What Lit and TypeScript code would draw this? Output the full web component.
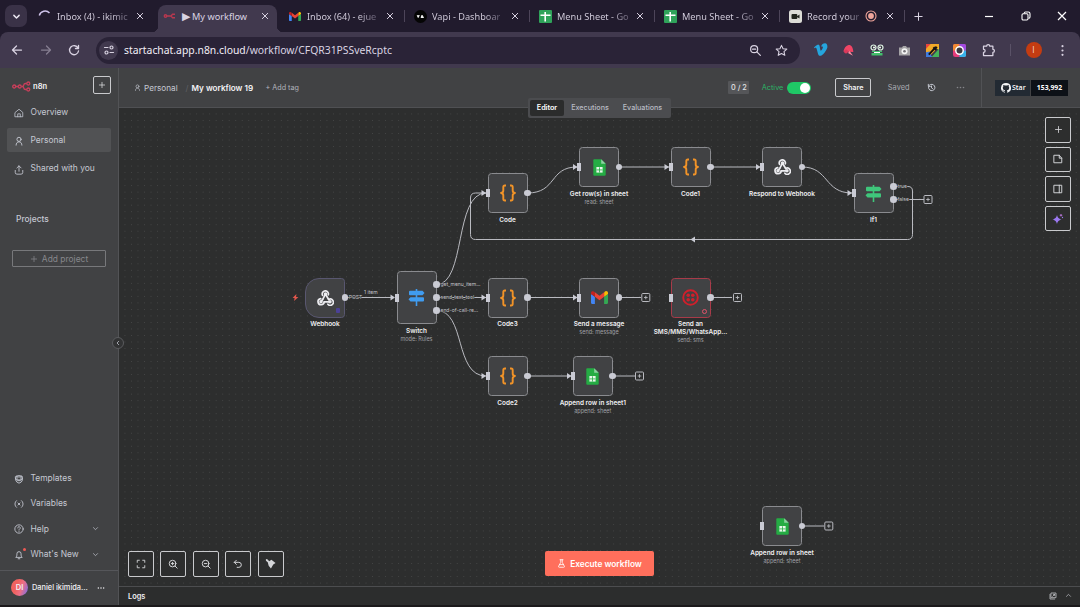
import { LitElement, html, svg, css, nothing } from "lit";
import { customElement, property } from "lit/decorators.js";
import { styleMap } from "lit/directives/style-map.js";
import { classMap } from "lit/directives/class-map.js";

/* ---------- icons ---------- */
const stroke = (size: number, body: unknown, w = 2) => html`<svg
  width=${size} height=${size} viewBox="0 0 24 24" fill="none" stroke="currentColor"
  stroke-width=${w} stroke-linecap="round" stroke-linejoin="round">${body}</svg>`;

const I: Record<string, (s?: number) => unknown> = {
  close: (s = 9) => stroke(s, svg`<path d="M4 4 20 20M20 4 4 20"/>`, 3),
  chevron: (s = 8) => stroke(s, svg`<path d="m5 9 7 7 7-7"/>`, 2.4),
  chevronBold: (s = 9) => stroke(s, svg`<path d="m5 9 7 7 7-7"/>`, 3.8),
  chevronUp: (s = 8) => stroke(s, svg`<path d="m5 15 7-7 7 7"/>`, 2.4),
  chevronLeft: (s = 6) => stroke(s, svg`<path d="m15 5-7 7 7 7"/>`, 3),
  plus: (s = 9) => stroke(s, svg`<path d="M12 4v16M4 12h16"/>`, 2.2),
  back: (s = 12) => stroke(s, svg`<path d="M21 12H4M11 4l-8 8 8 8"/>`, 2.5),
  forward: (s = 12) => stroke(s, svg`<path d="M3 12h17M13 4l8 8-8 8"/>`, 2.5),
  reload: (s = 12) => stroke(s, svg`<path d="M20 8a9 9 0 1 0 1 6M21 3v6h-6"/>`, 2.7),
  tune: (s = 12) => stroke(s, svg`<path d="M3 7h7M14 17h7"/><circle cx="17" cy="7" r="3"/><circle cx="7" cy="17" r="3"/>`, 2.4),
  zoomOut: (s = 13) => stroke(s, svg`<circle cx="9.5" cy="9.5" r="6.5"/><path d="m14.500 14.500 6.500 6.500M6.500 9.500h6"/>`, 2.2),
  star: (s = 13) => stroke(s, svg`<path d="m12 2.500 2.900 6.300 6.900.700-5.200 4.600 1.500 6.800L12 17.400l-6.100 3.500 1.500-6.800L2.200 9.500l6.900-.7z"/>`, 2),
  home: (s = 10) => stroke(s, svg`<path d="M3 10.500 12 3l9 7.500V21H3z"/><path d="M9 21v-7h6v7"/>`, 1.9),
  user: (s = 10) => stroke(s, svg`<circle cx="12" cy="8" r="5"/><path d="M5 22c0-5 3-8 7-8s7 3 7 8"/>`, 2.2),
  share: (s = 10) => stroke(s, svg`<path d="M12 15V2M7 7l5-5 5 5M3 13v5a4 4 0 0 0 4 4h10a4 4 0 0 0 4-4v-5"/>`, 2.1),
  box: (s = 10) => stroke(s, svg`<path d="M4 6q8-5 16 0v9q-1 5-8 7-7-2-8-7z"/><path d="M7 4.500v7l3 2.500h4l3-2.500v-7M4 11l4 5h8l4-5M9 7h6"/>`, 2.2),
  variable: (s = 10) => stroke(s, svg`<path d="M6 4C1 8 1 16 6 20M18 4c5 4 5 12 0 16M9.500 9.500l5 5M14.500 9.500l-5 5"/>`, 2.1),
  help: (s = 10) => stroke(s, svg`<circle cx="12" cy="12" r="10"/><path d="M9 9.500a3 3 0 1 1 4.500 2.500c-1 .7-1.500 1.200-1.500 2.500M12 17.500v.2"/>`, 2.1),
  bell: (s = 10) => stroke(s, svg`<path d="M5 17c2-2 2-4 2-8a5 5 0 0 1 10 0c0 4 0 6 2 8zM10 21h4"/>`, 2.2),
  history: (s = 9) => stroke(s, svg`<path d="M4 12a8.500 8.500 0 1 0 2.500-6L3.500 9M3.500 3.500V9H9M12 8v5l3 2"/>`, 2.6),
  dots: (s = 9) => html`<svg width=${s} height=${s} viewBox="0 0 24 24" fill="currentColor"><circle cx="4" cy="12" r="2.200"/><circle cx="12" cy="12" r="2.200"/><circle cx="20" cy="12" r="2.200"/></svg>`,
  vdots: (s = 13) => html`<svg width=${s} height=${s} viewBox="0 0 24 24" fill="currentColor"><circle cx="12" cy="4" r="2"/><circle cx="12" cy="12" r="2"/><circle cx="12" cy="20" r="2"/></svg>`,
  note: (s = 10) => stroke(s, svg`<path d="M3 3h12l6 7v11H3zM15 3v7h6" />`, 2.3),
  panel: (s = 10) => stroke(s, svg`<path d="M3 3h18v18H3zM15 3v18"/>`, 2.3),
  sparkle: (s = 12) => html`<svg width=${s} height=${s} viewBox="0 0 24 24" fill="#9b78f0"><path d="M10 4c1.500 5.500 3 7 9 9-6 2-7.500 3.500-9 9-1.500-5.500-3-7-9-9 6-2 7.500-3.500 9-9z"/><path d="M18 2v5M15.500 4.500h5" stroke="#c07be0" stroke-width="1.800"/><circle cx="21" cy="9" r="1.300"/></svg>`,
  fit: (s = 10) => stroke(s, svg`<path d="M3 8V3h5M16 3h5v5M21 16v5h-5M8 21H3v-5"/>`, 2.2),
  zin: (s = 10) => stroke(s, svg`<circle cx="11" cy="11" r="8"/><path d="m17 17 5 5M8 11h6M11 8v6"/>`, 2.4),
  zout: (s = 10) => stroke(s, svg`<circle cx="11" cy="11" r="8"/><path d="m17 17 5 5M8 11h6"/>`, 2.4),
  undo: (s = 10) => stroke(s, svg`<path d="M8 3 3 8l5 5M3 8h11a6 6 0 0 1 0 12h-4"/>`, 2.4),
  tidy: (s = 11) => html`<svg width=${s} height=${s} viewBox="0 0 24 24" fill="currentColor"><path d="M2 2l4 1 3 4 5-3 9 7-5 3-5 9-5-6-2-8-4-3z"/></svg>`,
  flask: (s = 9) => stroke(s, svg`<path d="M8 2h8M10 2v7L4 20q0 2 2 2h12q2 0 2-2L14 9V2M7 15h10"/>`, 2.2),
  popout: (s = 8) => stroke(s, svg`<path d="M7 3h14v14H7zM3 7v14h14M11 13l6-6M13 7h4v4"/>`, 2.4),
  puzzle: (s = 15) => stroke(s, svg`<path d="M4 5h5a2.500 2.500 0 0 1 5 0h5v5a2.500 2.500 0 0 1 0 5v5H4v-5c3.500 0 3.500-5 0-5z"/>`, 2),
  minimize: (s = 10) => html`<svg width=${s} height=${s} viewBox="0 0 10 10"><path d="M1 5.500h8" stroke="#fff" stroke-width="1.200"/></svg>`,
  restore: (s = 10) => html`<svg width=${s} height=${s} viewBox="0 0 10 10" fill="none" stroke="#fff" stroke-width="1.100"><rect x="1" y="2.800" width="6" height="6.200" rx="1.200"/><path d="M3 2.500Q3.200 1 4.500 1H7.300Q9 1 9 2.700V6q0 1.200-1.400 1.400"/></svg>`,
  winClose: (s = 10) => html`<svg width=${s} height=${s} viewBox="0 0 10 10"><path d="M1 1l8 8M9 1 1 9" stroke="#fff" stroke-width="1.200"/></svg>`,
  github: (s = 10) => html`<svg width=${s} height=${s} viewBox="0 0 16 16" fill="#f2f4f6"><path d="M8 0a8 8 0 0 0-2.530 15.590c.4.070.55-.17.550-.38v-1.490c-2.230.49-2.690-.94-2.690-.94-.36-.93-.89-1.170-.89-1.170-.73-.5.060-.49.060-.49.800.06 1.230.83 1.230.83.710 1.230 1.870.87 2.330.67.070-.52.280-.88.500-1.080-1.770-.2-3.640-.89-3.640-3.950 0-.87.310-1.590.820-2.150-.08-.2-.36-1.020.080-2.120 0 0 .67-.21 2.200.82a7.600 7.600 0 0 1 4 0c1.530-1.040 2.200-.82 2.200-.82.440 1.100.16 1.920.08 2.120.51.560.82 1.270.82 2.150 0 3.070-1.870 3.750-3.650 3.950.29.250.54.730.54 1.480v2.190c0 .21.150.46.550.38A8 8 0 0 0 8 0z"/></svg>`,
  bolt: (s = 7) => html`<svg width=${s} height=${s} viewBox="0 0 24 24" fill="#e2574c"><path d="M15 0 2 14h7l-2 10 15-14h-8z"/></svg>`,
  record: (s = 12) => html`<svg width=${s} height=${s} viewBox="0 0 12 12"><circle cx="6" cy="6" r="5" fill="none" stroke="#f0a59b" stroke-width="1.100"/><circle cx="6" cy="6" r="2.900" fill="#f0a59b"/></svg>`,
};

const fav: Record<string, unknown> = {
  spin: html`<svg width="14" height="14" viewBox="0 0 14 14" fill="none"><path d="M1.300 6.500A6 6 0 0 1 11.500 4" stroke="#cfc4ea" stroke-width="1.500"/></svg>`,
  n8n: html`<svg width="14" height="14" viewBox="0 0 14 14" fill="none" stroke="#b8384f" stroke-width="1.400"><circle cx="2.500" cy="7" r="1.200"/><path d="M3.500 7h4q1 0 1.300-1l.7-.8H12M7.500 7q1 0 1.300 1l.7.800H12"/></svg>`,
  gmail: html`<svg width="12" height="9" viewBox="0 0 24 18"><path d="M1.500 18H5.500V8L0 4v12.500Q0 18 1.500 18z" fill="#4285f4"/><path d="M18.500 18h4q1.500 0 1.500-1.500V4l-5.500 4z" fill="#34a853"/><path d="M18.500 2v6L24 4V2.700C24 0 21-.8 19.300.8z" fill="#fbbc04"/><path d="M5.500 8V1.500l6.500 5 6.500-5V8l-6.500 5z" fill="#ea4335"/><path d="M0 2.700V4l5.500 4V1.500C3-.8 0 0 0 2.700z" fill="#c5221f"/></svg>`,
  vapi: html`<svg width="13" height="13" viewBox="0 0 13 13"><circle cx="6.500" cy="6.500" r="6.500" fill="#050505"/><path d="M3.200 5.200l1 2.300L5.300 5.200M7 7.500l1-2.300 1.500 2.300z" fill="#fff" stroke="#fff" stroke-width=".9"/></svg>`,
  sheet: html`<svg width="13" height="13" viewBox="0 0 13 13"><rect width="13" height="13" rx="1" fill="#2fa35a"/><path d="M6.200 2v9.500M1.500 5.300h10" stroke="#fff" stroke-width="1.600"/></svg>`,
  cam: html`<svg width="13" height="13" viewBox="0 0 13 13"><rect width="13" height="13" rx="2.500" fill="#dcdcd6"/><rect x="2.500" y="4" width="5.800" height="5" rx="1" fill="#20241c"/><path d="M8 6.300 10.500 4.500v4L8 6.900z" fill="#20241c"/></svg>`,
};

const ext = [
  html`<svg width="14" height="14" viewBox="0 0 24 24" fill="#25a5dd"><path d="M23 7c-.1 2.200-1.700 5.300-4.700 9.200C15.200 20.200 12.500 22 10.300 22c-1.400 0-2.500-1.200-3.500-3.700L5 11.500C4.300 9 3.500 7.800 2.800 7.800l-1.600 1L0 7.500C3.400 4.600 5.100 2.900 6.500 2.800c1.800-.2 3 1.100 3.400 3.800.7 4.700 1.200 6.600 1.900 6.600.8 0 3.300-4.200 3.400-5.500.2-2-1.500-2.100-3-1.500 1.200-3.900 3.500-5.800 6.900-5.700 2.500.1 4 2.200 3.900 6.500z"/></svg>`,
  html`<svg width="13" height="13" viewBox="0 0 13 13"><path d="M6 1.200C9 .5 11 3 11.300 8L1.300 7.600C2 6.500 2.600 2 6 1.200z" fill="#ef4565"/><circle cx="4" cy="7.500" r="2" fill="#d93a5c"/><path d="M7.500 7l3.500 4.800L6 9z" fill="#ff8ba1"/></svg>`,
  html`<svg width="14" height="13" viewBox="0 0 14 13"><circle cx="3.500" cy="3.500" r="2.500" fill="#3a3a44" stroke="#dff3e4" stroke-width="1.200"/><circle cx="10.500" cy="3.500" r="2.500" fill="#3a3a44" stroke="#dff3e4" stroke-width="1.200"/><circle cx="4" cy="3.500" r="1" fill="#fff"/><circle cx="10" cy="3.500" r="1" fill="#fff"/><path d="M2 7h10v1H2zM1.500 9h11v2.500h-11z" fill="#43c06c"/><path d="M4 8.500h6" stroke="#fff" stroke-width="1"/></svg>`,
  html`<svg width="13" height="13" viewBox="0 0 13 13"><path d="M1 3.500h3L5 2h3l1 1.500h3v8H1z" fill="#a5a3a6"/><circle cx="6.500" cy="7.300" r="3" fill="#f5f5f5"/><circle cx="6.500" cy="7.300" r="1.300" fill="#77757a"/></svg>`,
  html`<svg width="13" height="13" viewBox="0 0 14 14"><path d="M0 0h8L0 8z" fill="#e8443c"/><path d="M7 0h7v7z" fill="#f6c52d"/><path d="M0 7v7h7z" fill="#3f7be0"/><path d="M14 5v9H6z" fill="#45b35a"/><path d="M0 5 5 0h9v3L3 14H0z" fill="#f2a928"/><path d="M0 9l4-1 2 6H0z" fill="#3f7be0"/><path d="M3 11.500 9 5" stroke="#111" stroke-width="2"/><path d="M8 3.500l3 3M10 5l1.500-2" stroke="#111" stroke-width="2.400"/></svg>`,
  html`<svg width="13" height="13" viewBox="0 0 14 14"><rect width="14" height="14" rx="2.500" fill="#e43b7a"/><path d="M0 7h7V0H2Q0 0 0 2z" fill="#f08a32"/><path d="M7 0h5q2 0 2 2v5H7z" fill="#a14be0"/><path d="M7 7h7v5q0 2-2 2H7z" fill="#38b3ea"/><circle cx="7" cy="7" r="4" fill="#3b3a40" stroke="#fff" stroke-width="1.600"/></svg>`,
];

const n8nLogo = html`<svg width="19" height="11" viewBox="0 0 19 11" fill="none" stroke="#c93f5b" stroke-width="1.300"><circle cx="2.200" cy="5.500" r="1.500"/><circle cx="7.700" cy="5.500" r="1.500"/><path d="M3.700 5.500h2.500M9.200 5.500h1.200q1.100 0 1.300-1.300Q12 2.500 13.500 2.500h1.300M10.400 5.500q1.100 0 1.300 1.300.3 1.700 1.800 1.700h1.300"/><circle cx="16.300" cy="2.500" r="1.500"/><circle cx="16.300" cy="8.500" r="1.500"/></svg>`;

/* glyphs shown in the middle of canvas nodes */
const glyph: Record<string, unknown> = {
  code: html`<svg width="18" height="18" viewBox="0 0 18 18" fill="none" stroke="#f19328" stroke-width="1.900" stroke-linejoin="round"><path d="M7 1.500H5.800Q4.300 1.500 4.300 3.200V6.500Q4.300 8.800 2 9q2.300.3 2.300 2.500v3.300q0 1.700 1.500 1.700H7M11 1.500h1.200q1.500 0 1.500 1.700V6.500Q13.700 8.800 16 9q-2.300.3-2.300 2.500v3.300q0 1.700-1.500 1.700H11"/></svg>`,
  sheets: html`<svg width="13" height="17" viewBox="0 0 13 17"><path d="M1.200.3h7l4.500 4.500v10.700q0 1.200-1.200 1.200H1.200Q.3 16.700.3 15.500v-14Q.3.300 1.200.3z" fill="#25ac44"/><path d="M8.200.3v4.500h4.500z" fill="#8ed1a2"/><rect x="3.400" y="8" width="6.200" height="5.600" fill="#e9f7ec"/><path d="M3.500 10.900h6M6.500 8.300v5.200" stroke="#25ac44" stroke-width=".8"/></svg>`,
  webhook: html`<svg width="17" height="16" viewBox="0 0 17 16" fill="none" stroke="#ececf0" stroke-width="1.700" stroke-linecap="round"><path d="M5.600 5.400a3.100 3.100 0 1 1 5.700-.6"/><path d="M8.500 4.200 5.600 9.600M8.500 4.200l3.200 5.300"/><path d="M3.700 8.600a3.100 3.100 0 1 0 3.500 3.200h5.600"/><path d="M11.700 9.500a3.100 3.100 0 1 1-.8 4.700"/><circle cx="8.500" cy="4" r=".9" fill="#ececf0"/><circle cx="4" cy="11.700" r=".9" fill="#ececf0"/><circle cx="13" cy="11.700" r=".9" fill="#ececf0"/><path d="M5.600 9.600 4 11.700"/></svg>`,
  signBlue: html`<svg width="17" height="17" viewBox="0 0 17 17" fill="#409cf0"><path d="M7.700 0h1.600v17H7.700z"/><path d="M2 1.800h12.500L16.500 4l-2 2.200H2q-1 0-1-1V2.800q0-1 1-1z"/><path d="M15 8.200H2.500L.5 10.300l2 2.200H15q1 0 1-1V9.200q0-1-1-1z"/></svg>`,
  signGreen: html`<svg width="17" height="17" viewBox="0 0 17 17" fill="#3fc67b"><path d="M7.700 0h1.600v17H7.700z"/><path d="M2 1.800h12.500L16.500 4l-2 2.200H2q-1 0-1-1V2.800q0-1 1-1z"/><path d="M15 8.200H2.500L.5 10.300l2 2.200H15q1 0 1-1V9.200q0-1-1-1z"/></svg>`,
  gmail: html`<svg width="17" height="13" viewBox="0 0 24 18"><path d="M1.500 18H5.500V8L0 4v12.500Q0 18 1.500 18z" fill="#4285f4"/><path d="M18.500 18h4q1.500 0 1.500-1.500V4l-5.500 4z" fill="#34a853"/><path d="M18.500 2v6L24 4V2.700C24 0 21-.8 19.300.8z" fill="#fbbc04"/><path d="M5.500 8V1.500l6.500 5 6.500-5V8l-6.500 5z" fill="#ea4335"/><path d="M0 2.700V4l5.500 4V1.500C3-.8 0 0 0 2.700z" fill="#c5221f"/></svg>`,
  twilio: html`<svg width="17" height="17" viewBox="0 0 17 17"><circle cx="8.500" cy="8.500" r="7.300" fill="none" stroke="#d01f2b" stroke-width="1.900"/><g fill="#d01f2b"><circle cx="6.200" cy="6.200" r="1.800"/><circle cx="10.800" cy="6.200" r="1.800"/><circle cx="6.200" cy="10.800" r="1.800"/><circle cx="10.800" cy="10.800" r="1.800"/></g></svg>`,
};

/* ---------- canvas model ---------- */
const ORIGIN = { x: 119, y: 108 };

interface FlowNode {
  x: number; y: number; h?: number; icon: string; label: string[]; sub?: string;
  outs?: number[]; input?: boolean; kind?: "trigger" | "error";
}

const nodes: FlowNode[] = [
  { x: 507.5, y: 193, icon: "code", label: ["Code"] },
  { x: 599, y: 167, icon: "sheets", label: ["Get row(s) in sheet"], sub: "read: sheet" },
  { x: 690.5, y: 167, icon: "code", label: ["Code1"] },
  { x: 782, y: 167, icon: "webhook", label: ["Respond to Webhook"] },
  { x: 873.5, y: 193, icon: "signGreen", label: ["If1"], outs: [-6.5, 6.5] },
  { x: 325, y: 297.5, icon: "webhook", label: ["Webhook"], input: false, kind: "trigger" },
  { x: 416.5, y: 297.5, h: 53, icon: "signBlue", label: ["Switch"], sub: "mode: Rules", outs: [-13, 0, 13] },
  { x: 507.5, y: 297.5, icon: "code", label: ["Code3"] },
  { x: 599, y: 297.5, icon: "gmail", label: ["Send a message"], sub: "send: message" },
  { x: 690.5, y: 297.5, icon: "twilio", label: ["Send an", "SMS/MMS/WhatsApp..."], sub: "send: sms", kind: "error" },
  { x: 507.5, y: 376, icon: "code", label: ["Code2"] },
  { x: 592.8, y: 376, icon: "sheets", label: ["Append row in sheet1"], sub: "append: sheet" },
  { x: 782, y: 526, icon: "sheets", label: ["Append row in sheet"], sub: "append: sheet" },
];

const edges = [
  "M345 297.500H394", "M436.500 297.500H486", "M527.500 297.500H577", "M619 297.500H641", "M710.500 297.500H732",
  "M527.500 376H571", "M613 376H635", "M802 526H824",
  "M619 167H669", "M710.500 167H760",
  "M527.500 193C557 193 549 167 577 167",
  "M802 167C829 167 824 193 852 193",
  "M436.500 284.500C466 284.500 454 193 486 193",
  "M436.500 310.500C466 310.500 454 376 486 376",
  "M893.500 199.500H924",
  "M893.500 186.500H908Q912.500 186.500 912.500 191V234.500Q912.500 239.500 907.500 239.500H475.500Q470.500 239.500 470.500 234.500V198Q470.500 193 475.500 193H486",
];

const arrows = [[486, 193], [577.5, 167], [669, 167], [760.5, 167], [852, 193], [395, 297.5], [486, 297.5], [577.5, 297.5], [486, 376], [571.5, 376]];
const adders = [[928, 199.5], [645.8, 297.5], [737.5, 297.5], [639.5, 376], [828.8, 526]];
const portLabels = [
  { x: 348.8, y: 297.5, t: "POST" }, { x: 440.5, y: 284.5, t: "get_menu_item..." },
  { x: 440.5, y: 297.5, t: "send_text_tool" }, { x: 440.5, y: 310.5, t: "end-of-call-re..." },
  { x: 897.5, y: 186.5, t: "true" }, { x: 897.5, y: 199.5, t: "false" },
];

@customElement("flow-node")
class FlowNodeEl extends LitElement {
  @property({ attribute: false }) node!: FlowNode;
  static styles = css`
    :host { display: flex; flex-direction: column; align-items: center; width: 90px; }
    .box { position: relative; box-sizing: border-box; width: 40px; display: grid; place-items: center; background: #414244; border: 1px solid #8a8b8f; border-radius: 3.500px; }
    .box.trigger { border-radius: 14px 3.500px 3.500px 14px; border-color: #595770; }
    .box.error { border-color: #a83b49; }
    svg { display: block; }
    .out { position: absolute; right: -4px; width: 6.500px; height: 6.500px; border-radius: 50%; background: #cacbd4; }
    .in { position: absolute; left: -3px; top: calc(50% - 4px); width: 4px; height: 8px; background: #cacbd4; }
    .pin { position: absolute; right: 4px; bottom: 3.500px; width: 4px; height: 5px; background: #4b4196; border-radius: 1px; }
    .warn { position: absolute; right: 2.500px; bottom: 2.500px; width: 3px; height: 3px; border: 1.500px solid #e0526a; border-radius: 50%; }
    .label { margin-top: 2.500px; font: 600 6.400px/8px Inter, "Open Sans", sans-serif; color: #f0f0f2; white-space: nowrap; text-align: center; }
    .sub { margin-top: .3px; font: 400 5.500px/8px Inter, "Open Sans", sans-serif; color: #a0a1a5; white-space: nowrap; }
  `;
  render() {
    const n = this.node;
    const h = n.h ?? 40;
    return html`
      <div class=${classMap({ box: true, trigger: n.kind === "trigger", error: n.kind === "error" })} style=${styleMap({ height: h + "px" })}>
        ${glyph[n.icon]}
        ${n.input === false ? nothing : html`<i class="in"></i>`}
        ${(n.outs ?? [0]).map((o) => html`<i class="out" style=${styleMap({ top: h / 2 - 4.25 + o + "px" })}></i>`)}
        ${n.kind === "trigger" ? html`<i class="pin"></i>` : nothing}
        ${n.kind === "error" ? html`<i class="warn"></i>` : nothing}
      </div>
      <div class="label">${n.label.map((l) => html`<div>${l}</div>`)}</div>
      ${n.sub ? html`<div class="sub">${n.sub}</div>` : nothing}
    `;
  }
}

@customElement("flow-canvas")
class FlowCanvas extends LitElement {
  static styles = css`
    :host { display: block; position: relative; overflow: hidden; background-color: #2d2e2e;
      background-image: radial-gradient(circle, #454646 0, #454646 .45px, transparent .75px);
      background-size: 6.530px 6.530px; background-position: 2.700px 2.700px; font-family: Inter, "Open Sans", sans-serif; }
    .wires { position: absolute; inset: 0; }
    .wires text { font: 5px Inter, sans-serif; fill: #c4c5cb; stroke: #2d2e2e; stroke-width: 1px; paint-order: stroke; }
    flow-node { position: absolute; }
    .stack { position: absolute; right: 9px; top: 9px; display: flex; flex-direction: column; gap: 4px; }
    .tools { position: absolute; left: 9px; bottom: 9.500px; display: flex; gap: 6.400px; }
    .btn { box-sizing: border-box; width: 26px; height: 25.600px; display: grid; place-items: center; border: 1px solid #c9cacd; border-radius: 2px; background: #2d2e2e; color: #d4d5d8; }
    .btn svg { display: block; }
    .run { position: absolute; left: 426px; bottom: 10px; width: 109px; height: 25px; display: flex; align-items: center; justify-content: center; gap: 4px; border-radius: 2px; background: #ff6f5c; color: #fff; font-weight: 600; font-size: 8.300px; white-space: nowrap; }
    .bolt { position: absolute; left: 173px; top: 185.500px; line-height: 0; }
  `;
  render() {
    return html`
      <svg class="wires" width="961" height="478" viewBox="119 108 961 478" fill="none">
        <g stroke="#b9bac0" stroke-width="1">${edges.map((d) => svg`<path d=${d}/>`)}</g>
        ${arrows.map(([x, y]) => svg`<path d="M${x - 4.5} ${y - 3}L${x} ${y}L${x - 4.5} ${y + 3}Z" fill="#cacbd4"/>`)}
        <path d="M695 236.500 690.500 239.500 695 242.500Z" fill="#cacbd4"/>
        ${adders.map(([x, y]) => svg`<g stroke="#b9bac0"><rect x=${x - 4} y=${y - 4} width="8" height="8" rx="1" fill="#2d2e2e"/><path d="M${x - 1.8} ${y}h3.600M${x} ${y - 1.8}v3.600" stroke-width=".9"/></g>`)}
        ${portLabels.map((p) => svg`<text x=${p.x} y=${p.y + 1.8}>${p.t}</text>`)}
        <text x="364" y="294.300">1 item</text>
      </svg>
      <div class="bolt">${I.bolt(7)}</div>
      ${nodes.map((n) => html`<flow-node .node=${n} style=${styleMap({ left: n.x - 45 - ORIGIN.x + "px", top: n.y - (n.h ?? 40) / 2 - ORIGIN.y + "px" })}></flow-node>`)}
      <div class="stack">${["plus", "note", "panel", "sparkle"].map((k) => html`<div class="btn">${I[k]()}</div>`)}</div>
      <div class="tools">${["fit", "zin", "zout", "undo", "tidy"].map((k) => html`<div class="btn">${I[k]()}</div>`)}</div>
      <div class="run">${I.flask(9)}<span>Execute workflow</span></div>
    `;
  }
}

@customElement("browser-chrome")
class BrowserChrome extends LitElement {
  static styles = css`
    :host { display: block; font-family: "Noto Sans", "Open Sans", sans-serif; background: #211b2d; color: #d9d3e2; }
    svg { display: block; }
    .tabs { height: 32px; display: flex; align-items: stretch; }
    .search { width: 22px; height: 22px; margin: 5px 6px 0 5px; border-radius: 7px; background: #3a3247; display: grid; place-items: center; color: #ece8f2; }
    .tab { box-sizing: border-box; width: 119px; margin-right: 6px; padding-left: 5px; display: flex; align-items: center; position: relative; }
    .tab.active { background: #41394e; border-radius: 8px 8px 0 0; margin-top: 5px; padding-bottom: 5px; }
    .tab.active::before, .tab.active::after { content: ""; position: absolute; bottom: 0; width: 6px; height: 6px; }
    .tab.active::before { left: -6px; background: radial-gradient(circle at 0 0, transparent 6px, #41394e 6.300px); }
    .tab.active::after { right: -6px; background: radial-gradient(circle at 100% 0, transparent 6px, #41394e 6.300px); }
    .icon { width: 14px; display: grid; place-items: center; margin-right: 5px; }
    .title { flex: 1; font-size: 9.200px; white-space: nowrap; }
    .title.fade { background: linear-gradient(90deg, #d9d3e2 75%, #6b6478 97%); -webkit-background-clip: text; background-clip: text; color: transparent; flex: none; }
    .play { font-size: 11px; line-height: 10px; margin-right: 2px; }
    .x { width: 18px; display: grid; place-items: center; margin: 0 3px 0 auto; }
    .sep::after { content: ""; position: absolute; right: -3px; top: 10px; height: 12px; width: 1px; background: #4d4559; }
    .rec { margin: 0 -3px 0 auto; }
    .rec + .x { margin-left: 7px; }
    .new { width: 20px; display: grid; place-items: center; }
    .win { margin-left: auto; display: flex; align-items: center; gap: 26.500px; padding-right: 13px; }
    .bar { height: 36px; background: #41394e; display: flex; align-items: center; border-radius: 8px 8px 0 0; }
    .nav { display: flex; align-items: center; gap: 16.500px; padding-left: 11px; width: 85px; }
    .nav .off { opacity: .45; }
    .url { box-sizing: border-box; width: 704px; height: 27px; border-radius: 14px; background: #2a2337; display: flex; align-items: center; padding: 0 12px 0 3px; font-size: 10.380px; }
    .chip { width: 19px; height: 19px; border-radius: 50%; background: #41394e; display: grid; place-items: center; margin-right: 6px; }
    .addr { flex: 1; white-space: nowrap; }
    .addr b { font-weight: 400; color: #f2eef6; }
    .acts { display: flex; gap: 13px; }
    .exts { display: flex; flex: 1; align-items: center; justify-content: space-between; padding: 0 11px 0 14px; }
    .div { width: 1px; height: 12px; background: #5a5267; }
    .me { width: 16px; height: 16px; border-radius: 50%; background: #c43c11; color: #f6d9cd; font: 8.500px/16px "Open Sans", sans-serif; text-align: center; }
  `;
  render() {
    const tabs = [
      ["spin", "Inbox (4) - ikimic"], ["n8n", "My workflow"], ["gmail", "Inbox (64) - ejue"], ["vapi", "Vapi - Dashboar"],
      ["sheet", "Menu Sheet - Go"], ["sheet", "Menu Sheet - Go"], ["cam", "Record your"],
    ];
    return html`
      <div class="tabs">
        <div class="search">${I.chevronBold(9)}</div>
        ${tabs.map(([k, t], i) => html`<div class=${classMap({ tab: true, active: i === 1, sep: i > 1 })}>
          <span class="icon">${fav[k]}</span>${i === 1 ? html`<span class="play">▶</span>` : nothing}<span class=${classMap({ title: true, fade: i !== 1 })}>${t}</span>
          ${i === 6 ? html`<span class="rec">${I.record()}</span>` : nothing}<span class="x">${I.close(8)}</span></div>`)}
        <div class="new">${I.plus(11)}</div>
        <div class="win">${I.minimize()}${I.restore()}${I.winClose()}</div>
      </div>
      <div class="bar">
        <div class="nav"><span>${I.back()}</span><span class="off">${I.forward()}</span><span>${I.reload()}</span></div>
        <div class="url"><span class="chip">${I.tune()}</span>
          <span class="addr"><b>startachat.app.n8n.cloud</b>/workflow/CFQR31PSSveRcptc</span>
          <span class="acts">${I.zoomOut()}${I.star()}</span></div>
        <div class="exts">${ext}${I.puzzle()}<i class="div"></i><span class="me">I</span>${I.vdots()}</div>
      </div>`;
  }
}

@customElement("side-nav")
class SideNav extends LitElement {
  static styles = css`
    :host { box-sizing: border-box; display: flex; flex-direction: column; width: 119px; background: #414244; border-right: 1px solid #525356; color: #c5c8d2; font: 8.450px Inter, "Open Sans", sans-serif; position: relative; }
    svg { display: block; }
    .brand { display: flex; align-items: center; padding: 8px 7px 0 12px; height: 18px; }
    .brand > svg { margin-top: 2px; }
    .brand b { margin: 2px 0 0 2px; font-size: 7.600px; color: #f1f1f3; font-weight: 600; flex: 1; }
    .add { box-sizing: border-box; width: 18px; height: 18px; border: 1px solid #c9cacd; border-radius: 2px; display: grid; place-items: center; color: #e4e4e7; }
    .item { height: 24px; margin: 0 7px; padding: 0 12px 0 7px; display: flex; align-items: center; border-radius: 2px; white-space: nowrap; }
    .item span { margin-left: 6.500px; flex: 1; }
    .ic { position: relative; top: .8px; }
    .main { margin-top: 6px; display: grid; gap: 4.400px; }
    .main .item span { position: relative; top: -.3px; }
    .item.on { background: #515254; }
    .projects { margin: 31px 0 0 16px; height: 14px; line-height: 14px; font-weight: 500; }
    .newp { box-sizing: border-box; margin: 24.500px 12px 0; height: 17px; border: 1px solid #77787b; display: flex; align-items: center; justify-content: center; gap: 4px; color: #87888c; border-radius: 1px; white-space: nowrap; }
    .foot { margin-top: auto; display: grid; gap: 1.400px; padding-bottom: 4px; }
    .ic i { position: absolute; right: -2px; top: -2px; width: 3.500px; height: 3.500px; border-radius: 50%; background: #ee5a55; }
    .me { box-sizing: border-box; height: 35px; border-top: 1px solid #55565a; display: flex; align-items: center; padding: 0 13px 1px 11px; color: #f0f0f3; font-weight: 500; font-size: 7.400px; white-space: nowrap; }
    .av { width: 17px; height: 17px; border-radius: 50%; background: linear-gradient(110deg, #f0625f 35%, #ed6f86 60%, #6f6df0); font: 600 7.500px/17px Inter, sans-serif; text-align: center; margin-right: 4px; }
    .me span { flex: 1; }
    .fold { position: absolute; right: -6px; top: 269px; width: 10px; height: 10px; border: 1px solid #5a5b5e; border-radius: 50%; background: #323334; display: grid; place-items: center; z-index: 2; }
  `;
  render() {
    const row = (k: string, t: string, o: { on?: boolean; more?: boolean; dot?: boolean } = {}) => html`
      <div class=${classMap({ item: true, on: !!o.on })}><div class="ic">${I[k](10)}${o.dot ? html`<i></i>` : nothing}</div><span>${t}</span>${o.more ? I.chevron(7) : nothing}</div>`;
    return html`
      <div class="brand">${n8nLogo}<b>n8n</b><div class="add">${I.plus(8)}</div></div>
      <div class="main">${row("home", "Overview")}${row("user", "Personal", { on: true })}${row("share", "Shared with you")}</div>
      <div class="projects">Projects</div>
      <div class="newp">${I.plus(8)}Add project</div>
      <div class="foot">${row("box", "Templates")}${row("variable", "Variables")}${row("help", "Help", { more: true })}${row("bell", "What's New", { more: true, dot: true })}</div>
      <div class="me"><div class="av">DI</div><span>Daniel ikimida...</span>${I.dots(8)}</div>
      <div class="fold">${I.chevronLeft()}</div>`;
  }
}

@customElement("app-root")
class AppRoot extends LitElement {
  static styles = css`
    :host { box-sizing: border-box; display: grid; grid-template-rows: 68px 1fr; width: 1080px; height: 607px; overflow: hidden; background: #1b191b; padding-bottom: 2px; font-family: Inter, "Open Sans", sans-serif; }
    svg { display: block; }
    .body { display: grid; grid-template-columns: 119px 1fr; min-height: 0; }
    .main { display: grid; grid-template-rows: 40px 478px 1fr; min-width: 0; position: relative; }
    header { box-sizing: border-box; display: flex; align-items: center; background: #414244; border-bottom: 1px solid #4f5053; padding-left: 15px; color: #c5c8d2; font-size: 8.200px; white-space: nowrap; }
    .crumb { display: flex; align-items: center; gap: 3px; width: 48.500px; }
    .slash { color: #5f6064; width: 9px; text-align: center; }
    .name { color: #f3f3f5; font-weight: 600; font-size: 8.150px; width: 74px; }
    .tag { font-size: 7.200px; color: #b2b4bc; }
    .right { margin-left: auto; display: flex; align-items: center; height: 100%; }
    .count { background: #555659; padding: 0 2.500px; border-radius: 1px; font: 500 7.300px/13px Inter, sans-serif; color: #e2e2e5; margin-right: 12.500px; }
    .active { color: #2bb566; font-size: 7.300px; margin-right: 4px; }
    .switch { width: 24px; height: 12px; border-radius: 6px; background: #1fc866; display: flex; justify-content: flex-end; align-items: center; margin-right: 24px; }
    .switch i { width: 10px; height: 10px; margin-right: 1px; border-radius: 50%; background: #fff; }
    .share { box-sizing: border-box; width: 36px; height: 19px; border: 1px solid #c9cacd; border-radius: 2px; color: #f3f3f5; font: 600 7.200px/17px Inter, sans-serif; text-align: center; margin-right: 16.500px; }
    .saved { font-size: 7.400px; color: #a9abb2; margin-right: 17px; }
    .dim { color: #85868a; margin: 0 16.500px 0 20px; }
    .gh { height: 100%; box-sizing: border-box; width: 99px; border-left: 1px solid #515255; display: flex; align-items: center; padding-left: 13px; font: 600 7px/16px "Open Sans", sans-serif; color: #fff; }
    .gh span { display: flex; align-items: center; gap: 1px; background: #222a33; height: 16px; width: 35px; box-sizing: border-box; padding-left: 6px; }
    .gh em { font-style: normal; font-weight: 700; font-size: 6.800px; line-height: 15.500px; background: #0d1117; height: 16px; width: 37px; margin-left: 1px; text-align: center; }
    .modes { position: absolute; left: 409px; top: 30px; box-sizing: border-box; width: 143px; height: 20px; padding: 2px; background: #4b4c4f; border-radius: 2px; display: flex; align-items: center; font-weight: 500; font-size: 7.200px; color: #b9bbc3; white-space: nowrap; }
    .modes span { line-height: 16px; border-radius: 2px; text-align: center; }
    .modes .on { width: 34px; background: #2b2c2c; color: #fff; font-weight: 600; }
    .modes .ex { width: 52px; }
    .modes .ev { width: 53px; }
    .logs { box-sizing: border-box; display: flex; align-items: center; border-top: 1px solid #4c4d4f; background: #2c2d2d; color: #f0f0f3; font-weight: 600; font-size: 7.400px; padding: 0 8px 0 9px; }
    .logs span { flex: 1; }
    .logs .ctl { display: flex; gap: 8px; color: #c0c1c5; }
  `;
  render() {
    return html`
      <browser-chrome></browser-chrome>
      <div class="body">
        <side-nav></side-nav>
        <div class="main">
          <header>
            <div class="crumb">${I.user(7)}Personal</div><span class="slash">/</span><span class="name">My workflow 19</span><span class="tag">+ Add tag</span>
            <div class="right">
              <span class="count">0 / 2</span><span class="active">Active</span><span class="switch"><i></i></span>
              <span class="share">Share</span><span class="saved">Saved</span>${I.history(9)}<span class="dim">${I.dots(9)}</span>
              <div class="gh"><span>${I.github(10)}Star</span><em>153,992</em></div>
            </div>
          </header>
          <flow-canvas></flow-canvas>
          <div class="logs"><span>Logs</span><div class="ctl">${I.popout(8)}${I.chevronUp(7)}</div></div>
          <div class="modes"><span class="on">Editor</span><span class="ex">Executions</span><span class="ev">Evaluations</span></div>
        </div>
      </div>`;
  }
}
